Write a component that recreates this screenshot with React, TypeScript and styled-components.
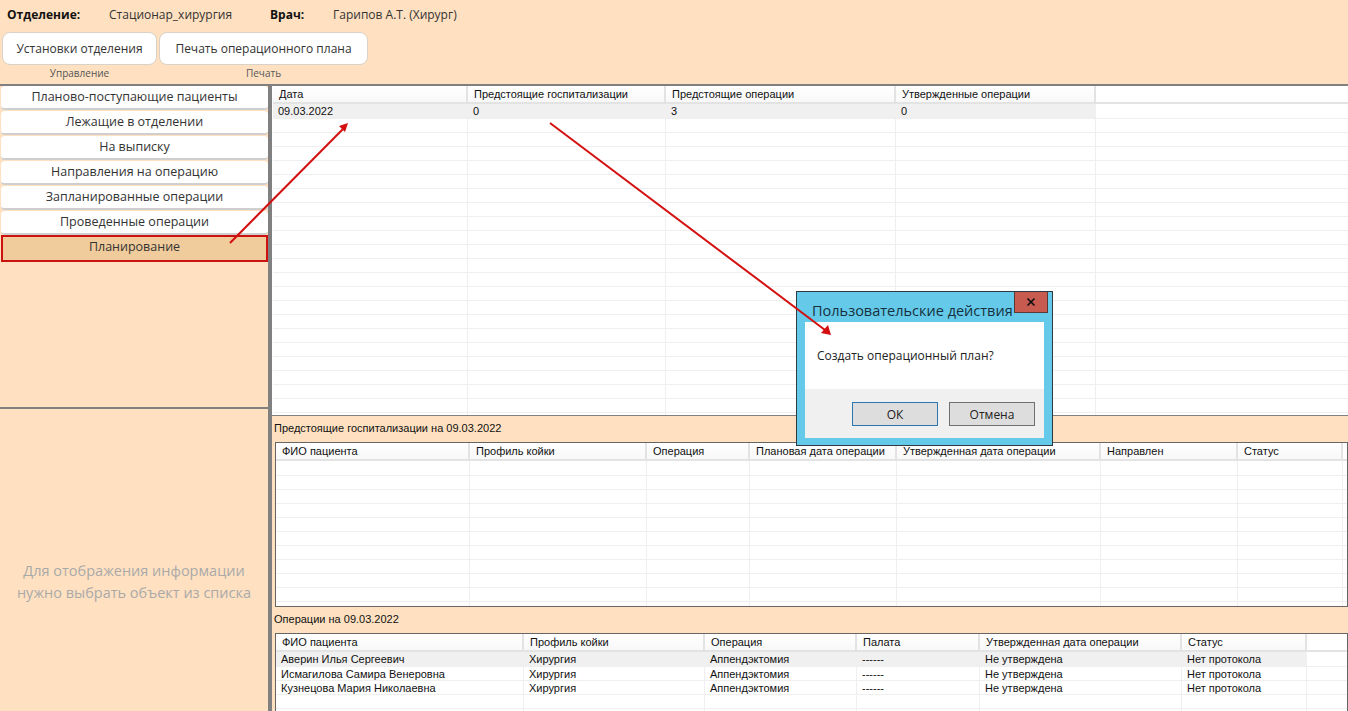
import styled, { createGlobalStyle } from "styled-components";
import { X } from "lucide-react";

const colors = {
  peach: "#FFE1C1",
  splitter: "#808080",
  selected: "#F0CB9B",
  red: "#CC1111",
  arrow: "#D40F0F",
  rowLine: "#EFEFEF",
  headLine: "#E3E3E3",
};

const uiFont = `"Open Sans", "Noto Sans", sans-serif`;
const gridFont = `"Liberation Sans", Arial, sans-serif`;

const GlobalStyle = createGlobalStyle`
  html, body {
    margin: 0;
    padding: 0;
    height: 100%;
    overflow: hidden;
    background: ${colors.peach};
  }
  * { box-sizing: border-box; }
`;

const Page = styled.div`
  position: relative;
  display: flex;
  flex-direction: column;
  width: 1348px;
  height: 711px;
  overflow: hidden;
  background: ${colors.peach};
  font-family: ${uiFont};
  color: #222;
`;

const TopBar = styled.header`
  flex: none;
  height: 86px;
  padding: 0 0 0 2px;
  border-bottom: 2px solid ${colors.splitter};
`;

const InfoRow = styled.div`
  display: flex;
  align-items: center;
  height: 30px;
  padding: 0 0 2px 5px;
  font-size: 12px;
`;

const InfoLabel = styled.b<{ $width: number }>`
  width: ${(p) => p.$width}px;
  font-weight: 700;
  color: #111;
`;

const InfoValue = styled.span<{ $width: number }>`
  width: ${(p) => p.$width}px;
  color: #333;
`;

const Ribbon = styled.div`
  display: flex;
  gap: 2px;
  padding-top: 2px;
`;

const RibbonGroup = styled.div<{ $width: number }>`
  display: flex;
  flex-direction: column;
  align-items: center;
  width: ${(p) => p.$width}px;
`;

const RibbonButton = styled.button`
  width: 100%;
  height: 33px;
  padding: 0;
  border: 1px solid #d9d2c8;
  border-radius: 8px;
  background: #fff;
  font-family: ${uiFont};
  font-size: 12px;
  color: #333;
`;

const RibbonCaption = styled.div`
  margin-top: 1px;
  font-size: 10px;
  line-height: 14px;
  color: #555;
`;

const Workspace = styled.div`
  flex: 1;
  display: flex;
  min-height: 0;
`;

const LeftPane = styled.aside`
  flex: none;
  display: flex;
  flex-direction: column;
  width: 268px;
`;

const NavList = styled.nav`
  flex: none;
  display: flex;
  flex-direction: column;
  gap: 1px;
  height: 323px;
  padding: 0 0 0 1px;
  border-bottom: 2px solid ${colors.splitter};
`;

const NavItem = styled.div<{ $active?: boolean }>`
  display: flex;
  align-items: center;
  justify-content: center;
  flex: none;
  height: ${(p) => (p.$active ? "27px" : "24px")};
  margin-top: ${(p) => (p.$active ? "-1px" : "0")};
  padding-bottom: ${(p) => (p.$active ? "4px" : "1px")};
  border-radius: ${(p) => (p.$active ? "0" : "4px")};
  border: ${(p) => (p.$active ? `2px solid ${colors.red}` : "none")};
  border-bottom: ${(p) => (p.$active ? `2px solid ${colors.red}` : "2px solid #cfcfcf")};
  background: ${(p) => (p.$active ? colors.selected : "#fff")};
  font-size: 12.5px;
  color: #333;
`;

const EmptyHint = styled.div`
  flex: 1;
  display: flex;
  flex-direction: column;
  justify-content: flex-end;
  padding-bottom: 107px;
  text-align: center;
  font-size: 14.5px;
  line-height: 22px;
  color: #a9a9a9;
`;

const Splitter = styled.div`
  flex: none;
  width: 4px;
  background: ${colors.splitter};
`;

const RightPane = styled.main`
  flex: 1;
  display: flex;
  flex-direction: column;
  min-width: 0;
`;

const TopGridSlot = styled.div`
  flex: none;
  height: 330px;
  border-bottom: 1px solid ${colors.splitter};
  padding-left: 1px;
  background: #fff;
  overflow: hidden;
`;

const SectionLabel = styled.div`
  flex: none;
  display: flex;
  align-items: center;
  height: 26px;
  padding: 0 0 2px 2px;
  font-family: ${gridFont};
  font-size: 11px;
  color: #111;
`;

const GridFrame = styled.div<{ $height: number }>`
  flex: none;
  height: ${(p) => p.$height}px;
  margin-left: 3px;
  border: 1px solid #666;
  background: #fff;
  overflow: hidden;
`;

const GridRoot = styled.div`
  font-family: ${gridFont};
  font-size: 11px;
  color: #111;
`;

const HeaderRow = styled.div`
  display: flex;
  height: 18px;
  border-bottom: 2px solid ${colors.headLine};
`;

const HeaderCell = styled.div<{ $width: number }>`
  flex: none;
  width: ${(p) => p.$width}px;
  padding: 1px 0 0 6px;
  line-height: 14px;
  border-right: 2px solid ${colors.headLine};
  background: linear-gradient(#ffffff, #f8f8f8);
  white-space: nowrap;
  overflow: hidden;
`;

const DataRow = styled.div`
  display: flex;
  height: 14px;
  border-bottom: 1px solid ${colors.rowLine};
  &:first-child {
    height: 15px;
  }
`;

const DataCell = styled.div<{ $width: number; $selected: boolean }>`
  flex: none;
  width: ${(p) => p.$width}px;
  padding-left: 5px;
  line-height: 14px;
  border-right: 1px solid ${(p) => (p.$selected ? "#f0f0f0" : colors.rowLine)};
  background: ${(p) => (p.$selected ? "#f0f0f0" : "#fff")};
  white-space: nowrap;
  overflow: hidden;
`;

const Dialog = styled.div`
  position: absolute;
  left: 796px;
  top: 291px;
  width: 257px;
  height: 155px;
  padding: 0 8px 7px;
  display: flex;
  flex-direction: column;
  border: 1px solid #2f3a40;
  background: #65caea;
`;

const DialogTitleBar = styled.div`
  flex: none;
  display: flex;
  align-items: center;
  justify-content: space-between;
  height: 30px;
`;

const DialogTitle = styled.div`
  padding: 7px 0 0 7px;
  font-size: 14.5px;
  white-space: nowrap;
  color: #16303c;
`;

const CloseButton = styled.div`
  position: absolute;
  top: 0;
  right: 4px;
  display: flex;
  align-items: center;
  justify-content: center;
  width: 34px;
  height: 21px;
  border: 1px solid #5a3a36;
  border-top: none;
  background: #c75b50;
  color: #111;
`;

const DialogMessage = styled.div`
  flex: none;
  height: 67px;
  padding: 24px 0 0 12px;
  background: #fff;
  font-size: 12px;
  line-height: 20px;
  color: #222;
`;

const DialogFooter = styled.div`
  flex: 1;
  display: flex;
  justify-content: flex-end;
  gap: 11px;
  padding: 13px 9px 0 0;
  background: #f0f0f0;
`;

const DialogButton = styled.button<{ $primary?: boolean }>`
  width: 86px;
  height: 24px;
  padding: 0;
  border: 1px solid ${(p) => (p.$primary ? "#2b78b0" : "#707070")};
  background: #dddddd;
  font-family: ${uiFont};
  font-size: 12px;
  color: #222;
`;

const ArrowLayer = styled.svg`
  position: absolute;
  left: 0;
  top: 0;
  width: 1348px;
  height: 711px;
  pointer-events: none;
`;

type GridProps = {
  columns: { title: string; width: number }[];
  rows: string[][];
  rowCount: number;
  selectedWidth?: boolean;
};

function DataGrid({ columns, rows, rowCount }: GridProps) {
  const blanks = Array.from({ length: rowCount }, (_, i) => rows[i] ?? []);
  return (
    <GridRoot>
      <HeaderRow>
        {columns.map((c) => (
          <HeaderCell key={c.title} $width={c.width}>
            {c.title}
          </HeaderCell>
        ))}
      </HeaderRow>
      <div>
        {blanks.map((row, i) => (
          <DataRow key={i}>
            {columns.map((c, j) => (
              <DataCell key={c.title} $width={c.width} $selected={i === 0 && rows.length > 0}>
                {row[j] ?? ""}
              </DataCell>
            ))}
          </DataRow>
        ))}
      </div>
    </GridRoot>
  );
}

const navItems = [
  "Планово-поступающие пациенты",
  "Лежащие в отделении",
  "На выписку",
  "Направления на операцию",
  "Запланированные операции",
  "Проведенные операции",
];

const dateColumns = [
  { title: "Дата", width: 195 },
  { title: "Предстоящие госпитализации", width: 198 },
  { title: "Предстоящие операции", width: 230 },
  { title: "Утвержденные операции", width: 200 },
];

const admissionColumns = [
  { title: "ФИО пациента", width: 194 },
  { title: "Профиль койки", width: 177 },
  { title: "Операция", width: 103 },
  { title: "Плановая дата операции", width: 147 },
  { title: "Утвержденная дата операции", width: 204 },
  { title: "Направлен", width: 137 },
  { title: "Статус", width: 105 },
];

const operationColumns = [
  { title: "ФИО пациента", width: 248 },
  { title: "Профиль койки", width: 181 },
  { title: "Операция", width: 152 },
  { title: "Палата", width: 123 },
  { title: "Утвержденная дата операции", width: 202 },
  { title: "Статус", width: 125 },
];

const operationRows = [
  ["Аверин Илья Сергеевич", "Хирургия", "Аппендэктомия", "------", "Не утверждена", "Нет протокола"],
  ["Исмагилова Самира Венеровна", "Хирургия", "Аппендэктомия", "------", "Не утверждена", "Нет протокола"],
  ["Кузнецова Мария Николаевна", "Хирургия", "Аппендэктомия", "------", "Не утверждена", "Нет протокола"],
];

export default function App() {
  return (
    <Page>
      <GlobalStyle />
      <TopBar>
        <InfoRow>
          <InfoLabel $width={102}>Отделение:</InfoLabel>
          <InfoValue $width={161}>Стационар_хирургия</InfoValue>
          <InfoLabel $width={63}>Врач:</InfoLabel>
          <InfoValue $width={200}>Гарипов А.Т. (Хирург)</InfoValue>
        </InfoRow>
        <Ribbon>
          <RibbonGroup $width={155}>
            <RibbonButton>Установки отделения</RibbonButton>
            <RibbonCaption>Управление</RibbonCaption>
          </RibbonGroup>
          <RibbonGroup $width={209}>
            <RibbonButton>Печать операционного плана</RibbonButton>
            <RibbonCaption>Печать</RibbonCaption>
          </RibbonGroup>
        </Ribbon>
      </TopBar>

      <Workspace>
        <LeftPane>
          <NavList>
            {navItems.map((item) => (
              <NavItem key={item}>{item}</NavItem>
            ))}
            <NavItem $active>Планирование</NavItem>
          </NavList>
          <EmptyHint>
            <div>Для отображения информации</div>
            <div>нужно выбрать объект из списка</div>
          </EmptyHint>
        </LeftPane>
        <Splitter />
        <RightPane>
          <TopGridSlot>
            <DataGrid columns={dateColumns} rows={[["09.03.2022", "0", "3", "0"]]} rowCount={24} />
          </TopGridSlot>
          <SectionLabel>Предстоящие госпитализации на 09.03.2022</SectionLabel>
          <GridFrame $height={165}>
            <DataGrid columns={admissionColumns} rows={[]} rowCount={11} />
          </GridFrame>
          <SectionLabel>Операции на 09.03.2022</SectionLabel>
          <GridFrame $height={90}>
            <DataGrid columns={operationColumns} rows={operationRows} rowCount={5} />
          </GridFrame>
        </RightPane>
      </Workspace>

      <Dialog>
        <DialogTitleBar>
          <DialogTitle>Пользовательские действия</DialogTitle>
          <CloseButton>
            <X size={12} strokeWidth={3.5} />
          </CloseButton>
        </DialogTitleBar>
        <DialogMessage>Создать операционный план?</DialogMessage>
        <DialogFooter>
          <DialogButton $primary>ОК</DialogButton>
          <DialogButton>Отмена</DialogButton>
        </DialogFooter>
      </Dialog>

      <ArrowLayer viewBox="0 0 1348 711">
        <line x1="230" y1="243" x2="343" y2="129" stroke={colors.arrow} strokeWidth="2" />
        <polygon points="348,123 339,126 345,132" fill={colors.arrow} />
        <line x1="550" y1="123" x2="825" y2="330" stroke={colors.arrow} strokeWidth="2" />
        <polygon points="831,335 821,333 828,325" fill={colors.arrow} />
      </ArrowLayer>
    </Page>
  );
}
